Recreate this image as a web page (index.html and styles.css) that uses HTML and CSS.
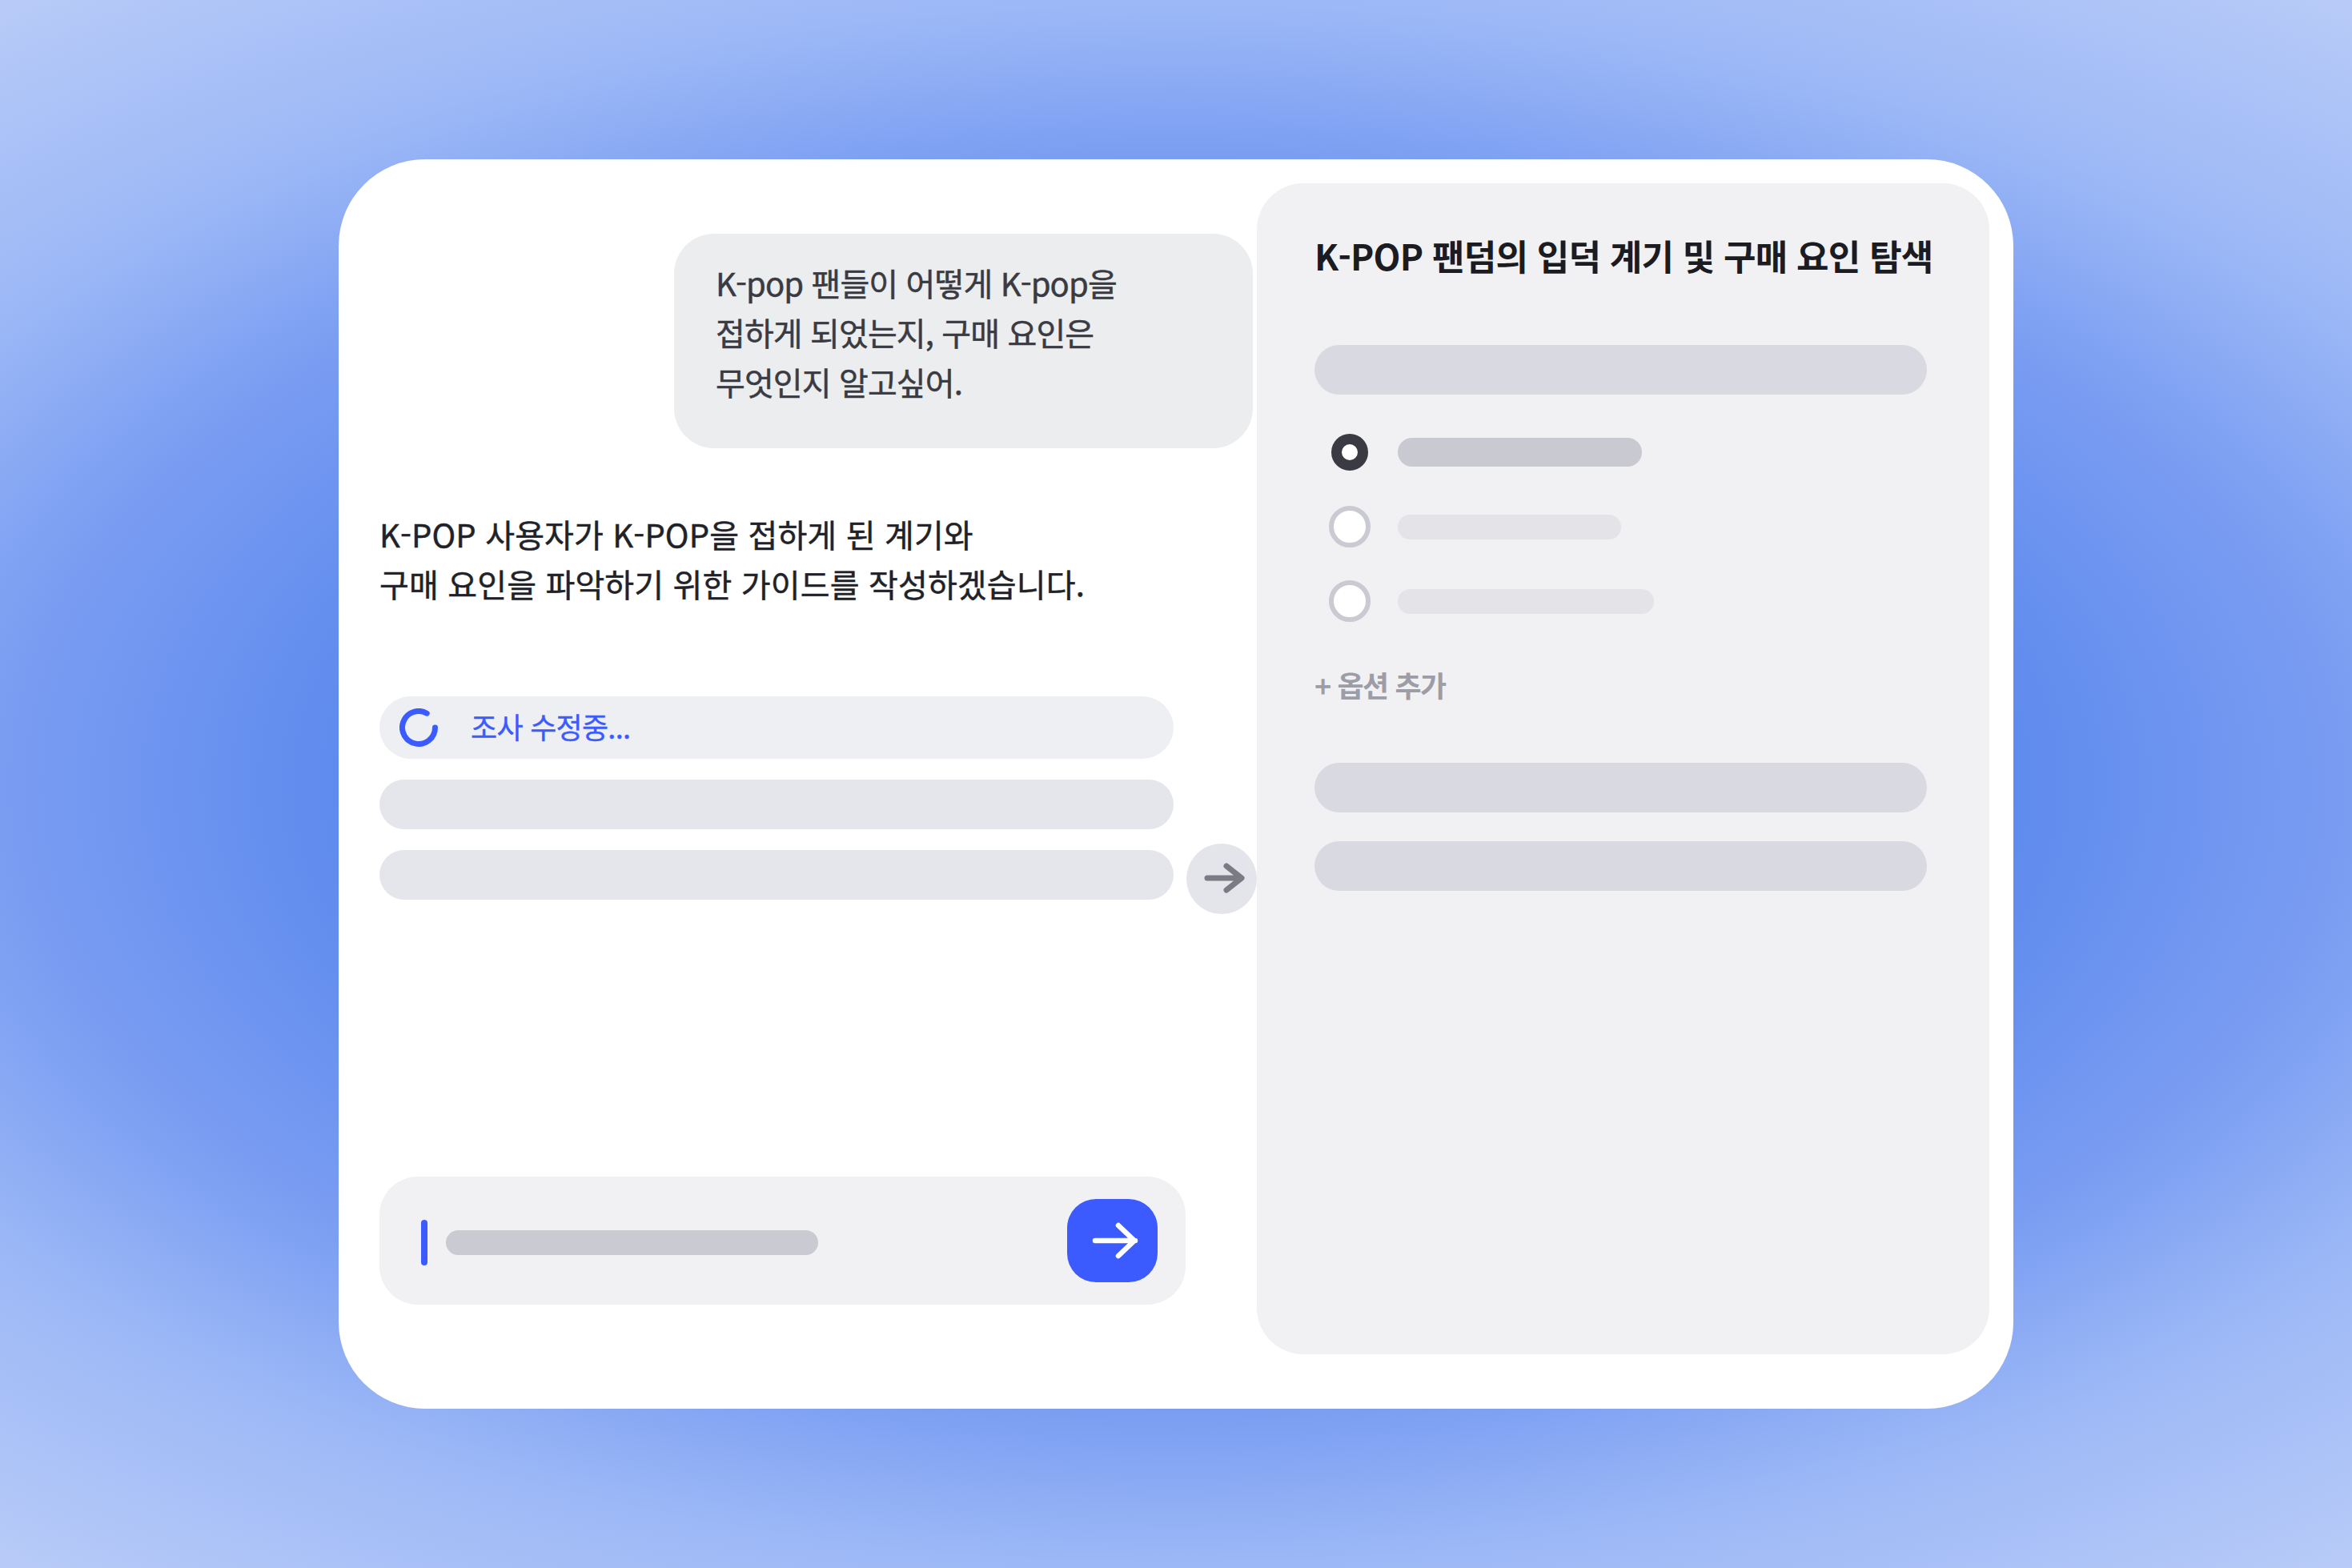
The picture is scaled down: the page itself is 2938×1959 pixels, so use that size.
FILE: index.html
```html
<!DOCTYPE html>
<html lang="ko">
<head>
<meta charset="utf-8">
<title>K-POP 팬덤 가이드</title>
<link rel="stylesheet" href="styles.css">
</head>
<body>
<main class="card">
  <section class="chat">
    <div class="bubble">K-pop 팬들이 어떻게 K-pop을<br>접하게 되었는지, 구매 요인은<br>무엇인지 알고싶어.</div>
    <p class="reply">K-POP 사용자가 K-POP을 접하게 된 계기와<br>구매 요인을 파악하기 위한 가이드를 작성하겠습니다.</p>
    <div class="steps">
      <div class="step-active">
        <svg class="spinner" viewBox="0 0 48 48" aria-hidden="true"><path d="M34.2 6.2 A20.5 20.5 0 1 0 44.5 24" fill="none" stroke="#3b5bff" stroke-width="7" stroke-linecap="round"/></svg>
        <span class="step-label">조사 수정중...</span>
      </div>
      <div class="step-bar step-second"></div>
      <div class="step-bar step-third"></div>
      <div class="go-circle">
        <svg viewBox="0 0 88 88" aria-hidden="true"><path d="M26 43 H68 M50 28 L69 43 L50 58" fill="none" stroke="#7a7b85" stroke-width="7" stroke-linecap="round" stroke-linejoin="round"/></svg>
      </div>
    </div>
    <div class="composer">
      <div class="caret"></div>
      <div class="composer-bar"></div>
      <button class="send" type="button" aria-label="보내기">
        <svg viewBox="0 0 113 104" aria-hidden="true"><path d="M35 52 H85 M64 33 L84 52 L64 71" fill="none" stroke="#fff" stroke-width="6.5" stroke-linecap="round" stroke-linejoin="round"/></svg>
      </button>
    </div>
  </section>
  <aside class="panel">
    <h1 class="panel-title">K-POP 팬덤의 입덕 계기 및 구매 요인 탐색</h1>
    <div class="field"></div>
    <ul class="options">
      <li class="option option-first"><span class="radio radio-on"></span><span class="opt-bar opt-dark w-a"></span></li>
      <li class="option option-second"><span class="radio"></span><span class="opt-bar w-b"></span></li>
      <li class="option option-third"><span class="radio"></span><span class="opt-bar w-c"></span></li>
    </ul>
    <div class="add-option">+ 옵션 추가</div>
    <div class="field field-a"></div>
    <div class="field field-b"></div>
  </aside>
</main>
</body>
</html>
```
FILE: styles.css
```css
* { box-sizing: border-box; }
html, body { margin: 0; height: 100%; }
body {
  width: 2938px;
  height: 1959px;
  display: flex;
  align-items: center;
  justify-content: center;
  overflow: hidden;
  background: radial-gradient(ellipse 1469px 780px at 50% 50%, #4f80ec 0%, #5f8bee 71%, #7a9df2 100%, #9cb8f6 125%, #b8cbf8 160%);
  font-family: "Noto Sans CJK KR", "Noto Sans", sans-serif;
}
.card {
  width: 2092px;
  height: 1561px;
  background: #fff;
  border-radius: 108px;
  padding: 30px 30px 68px 51px;
  display: flex;
}
.chat {
  width: 1096px;
  flex: none;
  display: flex;
  flex-direction: column;
  align-items: flex-start;
  padding-top: 63px;
}
.bubble {
  align-self: flex-end;
  margin-right: 5px;
  width: 723px;
  height: 268px;
  padding: 30px 52px;
  background: #ecedef;
  border-radius: 50px;
  font-size: 40px;
  line-height: 62px;
  letter-spacing: -0.022em;
  -webkit-text-stroke: 0.5px currentColor;
  color: #3a3b42;
}
.reply {
  margin: 76px 0 0;
  font-size: 40px;
  line-height: 62px;
  letter-spacing: 0.15px;
  -webkit-text-stroke: 0.5px currentColor;
  color: #212228;
}
.steps {
  position: relative;
  margin-top: 110px;
  width: 992px;
}
.step-active {
  height: 78px;
  border-radius: 39px;
  background: #eeeff3;
  display: flex;
  align-items: center;
  padding-left: 25px;
}
.spinner { width: 48px; height: 48px; }
.step-label {
  margin: -5px 0 0 41px;
  font-size: 36px;
  letter-spacing: -0.02em;
  -webkit-text-stroke: 0.4px currentColor;
  color: #3b5bff;
}
.step-bar {
  height: 62px;
  border-radius: 31px;
  background: #e5e6eb;
}
.step-second { margin-top: 26px; }
.step-third { margin-top: 26px; }
.go-circle {
  position: absolute;
  right: -104px;
  top: 184px;
  width: 88px;
  height: 88px;
  border-radius: 50%;
  background: #e4e5ea;
}
.go-circle svg { display: block; width: 88px; height: 88px; }
.composer {
  margin-top: 346px;
  width: 1007px;
  height: 160px;
  border-radius: 48px;
  background: #f1f1f4;
  display: flex;
  align-items: center;
  padding: 0 35px 0 52px;
}
.caret { width: 8px; height: 57px; margin-top: 5px; border-radius: 4px; background: #3b5bff; }
.composer-bar {
  margin: 5px 0 0 23px;
  width: 465px;
  height: 31px;
  border-radius: 16px;
  background: #c9cad2;
}
.send {
  margin-left: auto;
  width: 113px;
  height: 104px;
  padding: 0;
  border: 0;
  border-radius: 36px;
  background: #3b5bff;
}
.send svg { display: block; width: 113px; height: 104px; }
.panel {
  flex: 1;
  min-width: 0;
  background: #f1f1f4;
  border-radius: 58px;
  padding: 48px 78px 0 72px;
}
.panel-title {
  margin: 0;
  font-size: 44px;
  line-height: 84px;
  font-weight: 700;
  letter-spacing: -0.017em;
  color: #1b1c22;
  white-space: nowrap;
}
.field { height: 62px; border-radius: 31px; background: #d9d9e1; }
.panel-title + .field { margin-top: 70px; }
.options { list-style: none; margin: 0; padding: 0; }
.option { display: flex; align-items: center; height: 52px; }
.option-first { margin-top: 46px; }
.option-second { margin-top: 41px; }
.option-third { margin-top: 41px; }
.radio {
  width: 52px;
  height: 52px;
  margin-left: 18px;
  border-radius: 50%;
  border: 6px solid #c9cad2;
  background: #fff;
}
.radio-on {
  width: 46px;
  height: 46px;
  margin: 0 3px 0 21px;
  border: 13.5px solid #3a3a42;
}
.opt-bar { margin-left: 33.5px; height: 31px; border-radius: 16px; background: #e3e3e8; }
.opt-dark { height: 36px; border-radius: 18px; background: #c9c9d1; }
.w-a { width: 305px; }
.w-b { width: 279px; }
.w-c { width: 320px; }
.add-option {
  margin-top: 52px;
  font-size: 36px;
  line-height: 52px;
  font-weight: 700;
  letter-spacing: -0.04em;
  color: #9d9da7;
}
.field-a { margin-top: 72px; }
.field-b { margin-top: 36px; }
```
